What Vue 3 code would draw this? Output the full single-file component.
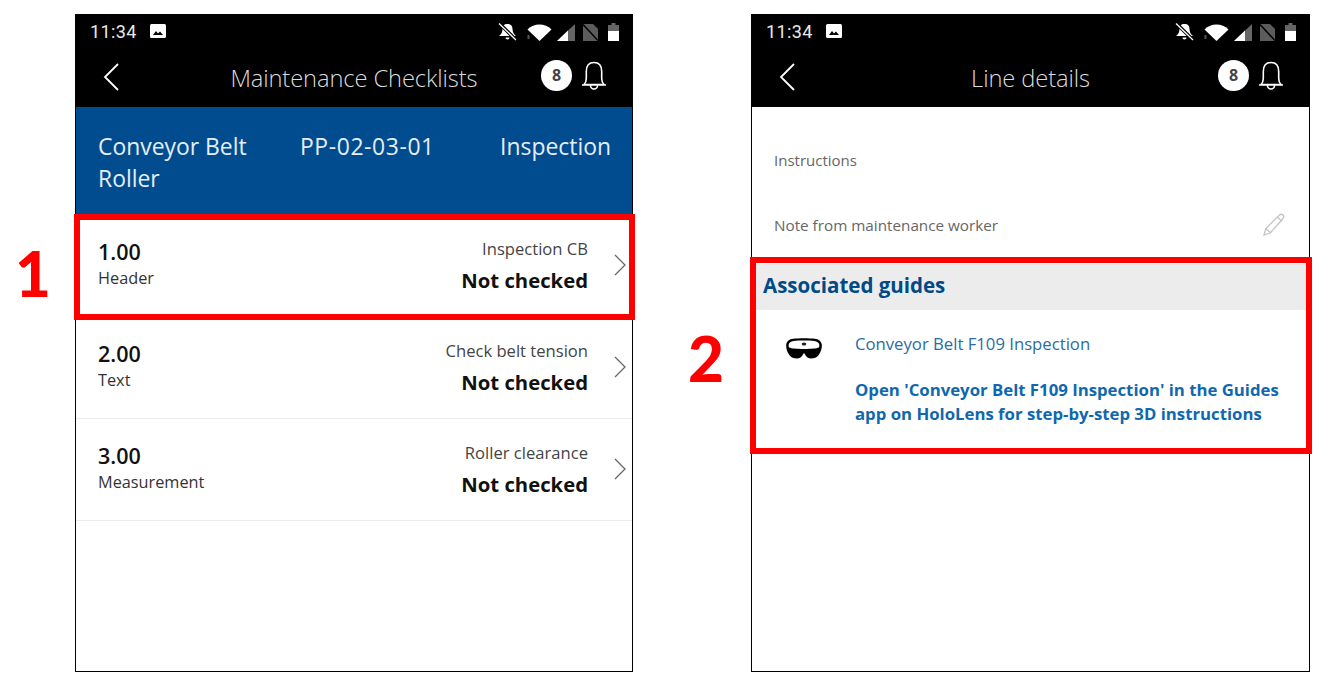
<script setup>
const rows = [
  { no: '1.00', type: 'Header', name: 'Inspection CB' },
  { no: '2.00', type: 'Text', name: 'Check belt tension' },
  { no: '3.00', type: 'Measurement', name: 'Roller clearance' },
]
</script>

<template>
  <div class="page">
    <div class="callout-cell one">1</div>
    <section class="phone">
      <header class="top">
        <div class="status">
          <span class="time">11:34</span>
          <svg class="pic" viewBox="0 0 16 14"><rect width="16" height="14" rx="1.5" fill="#fff"/><path d="M3 11l3-4 2 2.500 2-2 3 3.500z" fill="#000"/></svg>
          <div class="status-right">
            <svg class="s-bell" viewBox="0 0 19 18"><path d="M9.500 1C6 1 4.500 3 4.500 6c0 3.500-1.500 5.500-3.500 7h17c-2-1.500-3.500-3.500-3.500-7 0-3-1.500-5-5-5zM7.500 14.500h4a2 2 0 0 1-4 0z" fill="#fff"/><path d="M1 0l17 17" stroke="#000" stroke-width="3.400"/><path d="M1 .5l17 16.500" stroke="#fff" stroke-width="1.300"/></svg>
            <svg class="s-wifi" viewBox="0 0 25 17"><path d="M.5 5.500C7-1.300 18-1.300 24.500 5.500L12.500 17z" fill="#fff"/><path d="M.5 11h2v4h-2z" fill="#555"/></svg>
            <svg class="s-signal" viewBox="0 0 18 17"><path d="M0 17L18 0v17z" fill="#666"/><path d="M0 17L11 6.600V17z" fill="#fff"/></svg>
            <svg class="s-sim" viewBox="0 0 15 17"><path d="M0 0h10l5 5v12H0z" fill="#5c5c5c"/><path d="M0 .5l15 16" stroke="#000" stroke-width="1.500"/></svg>
            <svg class="s-batt" viewBox="0 0 11 18"><path d="M3.500 0h4v2H11v16H0V2h3.500z" fill="#666"/><path d="M0 8h11v10H0z" fill="#fff"/></svg>
          </div>
        </div>
        <div class="nav">
          <svg class="back" viewBox="0 0 16 28"><path d="M15 1L2 14l13 13" fill="none" stroke="#fff" stroke-width="1.800"/></svg>
          <h1 class="title">Maintenance Checklists</h1>
          <span class="badge">8</span>
          <svg class="bell" viewBox="0 0 26 30"><path d="M3 23.500c1.500-1.500 2.300-3 2.300-6V10.500C5.300 5 8 1.500 13 1.500s7.700 3.500 7.700 9v7c0 3 .8 4.500 2.300 6zM1 24h24M9.500 24.500a3.500 3.500 0 0 0 7 0" fill="none" stroke="#fff" stroke-width="1.600"/></svg>
        </div>
      </header>
      <div class="banner">
        <div class="b1">Conveyor Belt Roller</div>
        <div class="b2">PP-02-03-01</div>
        <div class="b3">Inspection</div>
      </div>
      <div class="list">
        <div v-for="(r, i) in rows" :key="r.no" class="row">
          <div class="row-left">
            <div class="no">{{ r.no }}</div>
            <div class="type">{{ r.type }}</div>
          </div>
          <div class="row-right">
            <div class="name">{{ r.name }}</div>
            <div class="state">Not checked</div>
          </div>
          <svg class="chev" viewBox="0 0 12 22"><path d="M1 1l10 10L1 21" fill="none" stroke="#666" stroke-width="1.300"/></svg>
          <div v-if="i === 0" class="redbox box1"></div>
        </div>
      </div>
    </section>

    <div class="callout-cell two">2</div>
    <section class="phone">
      <header class="top">
        <div class="status">
          <span class="time">11:34</span>
          <svg class="pic" viewBox="0 0 16 14"><rect width="16" height="14" rx="1.5" fill="#fff"/><path d="M3 11l3-4 2 2.500 2-2 3 3.500z" fill="#000"/></svg>
          <div class="status-right">
            <svg class="s-bell" viewBox="0 0 19 18"><path d="M9.500 1C6 1 4.500 3 4.500 6c0 3.500-1.500 5.500-3.500 7h17c-2-1.500-3.500-3.500-3.500-7 0-3-1.500-5-5-5zM7.500 14.500h4a2 2 0 0 1-4 0z" fill="#fff"/><path d="M1 0l17 17" stroke="#000" stroke-width="3.400"/><path d="M1 .5l17 16.500" stroke="#fff" stroke-width="1.300"/></svg>
            <svg class="s-wifi" viewBox="0 0 25 17"><path d="M.5 5.500C7-1.300 18-1.300 24.500 5.500L12.500 17z" fill="#fff"/><path d="M.5 11h2v4h-2z" fill="#555"/></svg>
            <svg class="s-signal" viewBox="0 0 18 17"><path d="M0 17L18 0v17z" fill="#666"/><path d="M0 17L11 6.600V17z" fill="#fff"/></svg>
            <svg class="s-sim" viewBox="0 0 15 17"><path d="M0 0h10l5 5v12H0z" fill="#5c5c5c"/><path d="M0 .5l15 16" stroke="#000" stroke-width="1.500"/></svg>
            <svg class="s-batt" viewBox="0 0 11 18"><path d="M3.500 0h4v2H11v16H0V2h3.500z" fill="#666"/><path d="M0 8h11v10H0z" fill="#fff"/></svg>
          </div>
        </div>
        <div class="nav">
          <svg class="back" viewBox="0 0 16 28"><path d="M15 1L2 14l13 13" fill="none" stroke="#fff" stroke-width="1.800"/></svg>
          <h1 class="title">Line details</h1>
          <span class="badge">8</span>
          <svg class="bell" viewBox="0 0 26 30"><path d="M3 23.500c1.500-1.500 2.300-3 2.300-6V10.500C5.300 5 8 1.500 13 1.500s7.700 3.500 7.700 9v7c0 3 .8 4.500 2.300 6zM1 24h24M9.500 24.500a3.500 3.500 0 0 0 7 0" fill="none" stroke="#fff" stroke-width="1.600"/></svg>
        </div>
      </header>
      <div class="details">
        <div class="field f1">Instructions</div>
        <div class="field f2">
          <span>Note from maintenance worker</span>
          <svg class="pencil" viewBox="0 0 24 24"><path d="M2 22l1.800-6.500L17.500 2c1-1 2.500-1 3.500 0s1 2.500 0 3.500L8.500 19.800zM3.800 15.500l4.700 4.300M15.500 4l4.500 4.500" fill="none" stroke="#c4c4c4" stroke-width="1.300"/></svg>
        </div>
        <div class="guides">
          <div class="guides-head">Associated guides</div>
          <div class="guide-body">
            <svg class="visor" viewBox="0 0 36 21"><path fill-rule="evenodd" d="M7 .8C13 .1 23 .1 29 .8c3.500.4 6.500 2.500 6.800 6 .3 3.500-1 7.500-3.300 10.500-2.500 3.200-8 4.300-11 2.200-1.600-1.100-2.600-3.500-3.500-4.500-.9 1-1.900 3.400-3.500 4.500-3 2.100-8.500 1-11-2.200C1.200 14.300-.1 10.300.2 6.800.5 3.300 3.500 1.200 7 .8zM7.500 3C5 3.300 3 4.500 2.700 6.800c-.1 1 0 2 .3 2.800 3 1 6.500 1.400 15 1.400s12-.4 15-1.400c.3-.8.400-1.800.3-2.800C33 4.500 31 3.300 28.500 3 23 2.400 13 2.400 7.500 3z" fill="#000"/><ellipse cx="18" cy="6" rx="2.300" ry="1.500" fill="#222"/></svg>
            <div class="guide-text">
              <div class="guide-name">Conveyor Belt F109 Inspection</div>
              <div class="guide-link">Open 'Conveyor Belt F109 Inspection' in the Guides app on HoloLens for step-by-step 3D instructions</div>
            </div>
          </div>
          <div class="redbox box2"></div>
        </div>
      </div>
    </section>
  </div>
</template>

<style>
html, body { margin: 0; background: #fff; }
</style>

<style scoped>
.page {
  width: 1324px;
  height: 684px;
  box-sizing: border-box;
  padding-top: 14px;
  display: grid;
  grid-template-columns: 75px 558px 118px 559px;
  font-family: "Open Sans", "Noto Sans", sans-serif;
  overflow: hidden;
  background: #fff;
}
.phone {
  height: 658px;
  box-sizing: border-box;
  border: 1px solid #000;
  background: #fff;
  display: flex;
  flex-direction: column;
}
.top { background: #000; height: 92px; color: #fff; flex: none; }
.status {
  height: 34px;
  box-sizing: border-box;
  padding: 0 13px 2px 14px;
  display: flex;
  align-items: center;
  gap: 13px;
}
.time { font-family: Roboto, sans-serif; font-size: 18px; color: #e8e8e8; letter-spacing: .4px; }
.pic { width: 16px; height: 14px; }
.status-right { margin-left: auto; display: flex; align-items: flex-end; height: 18px; margin-top: 1px; }
.s-bell { width: 19px; height: 18px; margin-right: 10px; }
.s-wifi { width: 25px; height: 17px; margin-right: 5px; }
.s-signal { width: 18px; height: 17px; margin-right: 8px; }
.s-sim { width: 15px; height: 17px; margin-right: 10px; }
.s-batt { width: 11px; height: 18px; }
.nav {
  height: 58px;
  position: relative;
  display: flex;
  align-items: center;
  padding: 0 25px 0 27px;
}
.back { width: 16px; height: 28px; margin-top: -3px; }
.title {
  position: absolute;
  left: 0;
  right: 0;
  margin: 0;
  text-align: center;
  font-weight: 300;
  font-size: 23.7px;
  color: #dcdcdc;
  top: 11px;
  line-height: 36px;
  letter-spacing: -.1px;
}
.badge {
  margin-left: auto;
  width: 31px;
  height: 31px;
  border-radius: 50%;
  background: #fff;
  color: #444;
  font-size: 16px;
  font-weight: 700;
  display: flex;
  align-items: center;
  justify-content: center;
  margin-top: -6px;
  margin-right: 9px;
}
.bell { width: 26px; height: 30px; margin-top: -4px; }
.banner {
  height: 107px;
  flex: none;
  background: #004c8f;
  box-sizing: border-box;
  padding: 24px 21px 0 22px;
  display: grid;
  grid-template-columns: 202px 1fr auto;
  font-size: 22.9px;
  line-height: 32px;
  color: #e6eef5;
}
.b1 { width: 175px; }
.b2 { letter-spacing: .6px; }
.list { padding-top: 1px; }
.row {
  position: relative;
  height: 101px;
  border-bottom: 1px solid #ececec;
  display: flex;
  padding: 0 6px 0 22px;
}
.row-left { padding-top: 22px; }
.no { font-size: 21.5px; font-weight: 600; color: #111; line-height: 29px; }
.type { font-size: 16.3px; color: #333; line-height: 22px; margin-top: 1px; }
.row-right { margin-left: auto; text-align: right; padding-top: 22px; }
.name { font-size: 16.6px; color: #444; line-height: 24px; }
.state { font-size: 20.3px; font-weight: 700; color: #111; line-height: 30px; margin-top: 4px; }
.chev { width: 12px; height: 22px; margin: 39px 0 0 26px; }
.redbox {
  position: absolute;
  box-sizing: border-box;
  border: 6px solid #ff0000;
  pointer-events: none;
}
.box1 { left: -2px; right: -3px; top: -1px; bottom: -4px; }
.details { flex: 1; display: flex; flex-direction: column; }
.field {
  font-size: 15px;
  color: #666;
  padding: 0 23px 0 22px;
  display: flex;
  align-items: center;
  justify-content: space-between;
}
.f1 { height: 36px; margin-top: 35px; }
.f2 { height: 36px; margin-top: 29px; font-size: 15.25px; }
.pencil { width: 24px; height: 24px; }
.guides { position: relative; margin-top: 21px; padding: 0 3px; }
.guides-head {
  height: 46px;
  background: #ececec;
  display: flex;
  align-items: center;
  padding-left: 8px;
  padding-bottom: 4px;
  box-sizing: border-box;
  font-size: 20.5px;
  font-weight: 700;
  color: #014a86;
}
.guide-body { display: flex; padding: 0 0 0 31px; height: 137px; box-sizing: border-box; }
.visor { width: 36px; height: 21px; margin-top: 28px; flex: none; }
.guide-text { margin-left: 33px; padding-top: 21px; }
.guide-name { font-size: 16.7px; color: #2a6ca3; line-height: 26px; }
.guide-link { font-size: 16.75px; font-weight: 700; color: #0f68ae; line-height: 24px; margin-top: 21px; width: 440px; }
.box2 { left: -2px; right: -3px; top: -7px; height: 197px; }
.callout-cell {
  font-family: Lato, "Open Sans", sans-serif;
  font-weight: 900;
  font-size: 62px;
  color: #ff0000;
  line-height: 60px;
}
.one { padding: 229px 0 0 15px; }
.two { padding: 314px 0 0 28px; text-align: center; }
</style>
